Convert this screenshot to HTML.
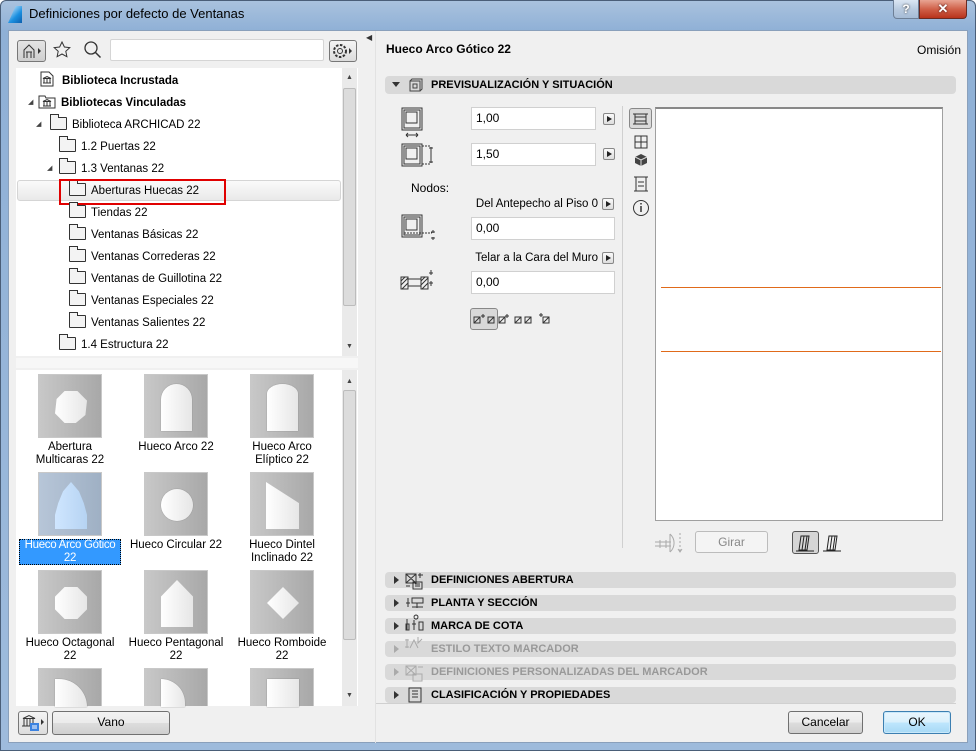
<!DOCTYPE html>
<html><head><meta charset="utf-8"><style>
*{box-sizing:border-box;margin:0;padding:0}
body{width:976px;height:751px;overflow:hidden;background:#fff;font-family:"Liberation Sans",sans-serif;font-size:12px;color:#000;position:relative}
.a{position:absolute}
.frame{left:0;top:0;width:976px;height:751px;background:linear-gradient(#a9c2de,#8fb0d6 30px,#9ebbdc);border:1px solid #4a5e78;border-radius:6px 6px 0 0}
.client{left:8px;top:30px;width:960px;height:713px;background:#f0f0f0;border:1px solid #8aa0bb}
.tree{left:16px;top:68px;width:342px;height:288px;background:#fff}
.thumbs{left:16px;top:370px;width:342px;height:336px;background:#fff}
.sb{background:#eaeaea;width:15px}
.sbt{background:#dcdcdc;border:1px solid #bcbcbc;border-radius:2px}
.ti{position:absolute;height:22px;line-height:22px;white-space:nowrap;font-size:11.5px}
.fold{display:inline-block;width:17px;height:13px;border:1px solid #333;background:#f3f3f3;vertical-align:-2px;margin-right:5px;position:relative;border-radius:1px}
.fold:before{content:"";position:absolute;left:-1px;top:-4px;width:7px;height:3px;border:1px solid #333;border-bottom:none;background:#f3f3f3}
.tri{position:absolute;font-size:7px;color:#444}
.th{position:absolute;width:64px;height:64px;background:linear-gradient(90deg,#c8c8c8,#a8a8a8);border:1px solid #c8c8c8}
.lab{position:absolute;width:106px;text-align:center;line-height:13px;color:#000;font-size:11.5px}
.shape{position:absolute;background:linear-gradient(90deg,#fff,#e6e6e6);box-shadow:0 0 1px #777}
.inp{position:absolute;background:#fff;border:1px solid #d0d0d0;height:23px;line-height:21px;padding-left:4px}
.arr{position:absolute;width:12px;height:12px;border:1px solid #888;border-radius:2px;background:linear-gradient(#fafafa,#ddd)}
.arr:after{content:"";position:absolute;left:3px;top:2px;border-left:5px solid #222;border-top:3.5px solid transparent;border-bottom:3.5px solid transparent}
.sec{position:absolute;left:385px;width:571px;height:16px;background:#d9d9d9;border-radius:4px;font-weight:bold;font-size:11px;line-height:16px;padding-left:46px}
.sec:before{content:"";position:absolute;left:9px;top:4px;border-left:5px solid #333;border-top:4px solid transparent;border-bottom:4px solid transparent}
.sec.dis{color:#999}.sec.dis:before{border-left-color:#aaa}
.btn{position:absolute;border:1px solid #707070;border-radius:3px;background:linear-gradient(#f2f2f2,#ebebeb 50%,#dddddd 51%,#cfcfcf);text-align:center;line-height:21px}
.rl{position:absolute;right:378px;white-space:nowrap;font-size:11.5px}
</style></head><body>
<div class="a frame"></div>
<div class="a" style="left:8px;top:6px;width:14px;height:17px;background:linear-gradient(135deg,#eaf6ff,#1a8fe0 60%,#0b5fae);clip-path:polygon(55% 0,100% 0,100% 100%,0 100%)"></div>
<div class="a" style="left:29px;top:6px;font-size:13px;color:#000">Definiciones por defecto de Ventanas</div>
<div class="a" style="left:893px;top:0;width:26px;height:19px;border:1px solid #6d7f96;border-top:none;border-radius:0 0 0 4px;background:linear-gradient(#dbe6f3,#b9cbe0 50%,#a6bcd6);text-align:center;color:#fff;font-weight:bold;font-size:12px;line-height:18px;text-shadow:0 0 2px #333">?</div>
<div class="a" style="left:919px;top:0;width:48px;height:19px;border:1px solid #6b2a22;border-top:none;border-radius:0 0 4px 0;background:linear-gradient(#e8a493,#d0614a 50%,#b8331c);text-align:center;color:#fff;font-weight:bold;font-size:13px;line-height:18px;text-shadow:0 0 2px #300">✕</div>
<div class="a client"></div>

<div class="a" style="left:17px;top:40px;width:29px;height:22px;border:1px solid #777;border-radius:3px;background:linear-gradient(#e4e4e4,#cfcfcf)"></div>
<svg class="a" style="left:22px;top:43px" width="22" height="16"><path d="M2 15V7l5-5 5 5v8M4 9h6M5 9v6M9 9v6" fill="none" stroke="#333"/><path d="M16 5l3 3-3 3z" fill="#333"/></svg>
<svg class="a" style="left:52px;top:40px" width="20" height="20"><path d="M10 2l2.4 5 5.4.6-4 3.7 1.1 5.4L10 14l-4.9 2.7 1.1-5.4-4-3.7 5.4-.6z" fill="none" stroke="#333"/></svg>
<svg class="a" style="left:83px;top:40px" width="20" height="20"><circle cx="8" cy="8" r="6" fill="none" stroke="#333" stroke-width="1.3"/><path d="M12.5 12.5l5 5" stroke="#333" stroke-width="1.5"/></svg>
<div class="a" style="left:110px;top:39px;width:214px;height:22px;background:#fff;border:1px solid #d5d5d5;border-radius:2px"></div>
<div class="a" style="left:329px;top:40px;width:28px;height:22px;border:1px solid #777;border-radius:3px;background:linear-gradient(#f4f4f4,#dcdcdc)"></div>
<svg class="a" style="left:331px;top:42px" width="24" height="18"><circle cx="9" cy="9" r="6" fill="none" stroke="#333" stroke-dasharray="2.5 1.5" stroke-width="2"/><circle cx="9" cy="9" r="2.5" fill="none" stroke="#333"/><path d="M18 6l3 3-3 3z" fill="#333"/></svg>
<div class="a" style="left:366px;top:33px;font-size:8px;color:#333">◀</div>

<div class="a tree">
 <div class="a sb" style="left:326px;top:0;height:288px"></div>
 <div class="a" style="left:330px;top:6px;font-size:7px;color:#444">▲</div>
 <div class="a sbt" style="left:327px;top:20px;width:13px;height:218px"></div>
 <div class="a" style="left:330px;top:275px;font-size:7px;color:#444">▼</div>
 <div class="a" style="left:1px;top:112px;width:324px;height:21px;border:1px solid #d5d5d5;border-radius:3px;background:linear-gradient(#fafafa,#e9e9e9)"></div>
 <div class="ti" style="left:24px;top:2px;font-weight:bold"><svg width="14" height="16" style="vertical-align:-3px;margin-right:8px"><path d="M1 1h8l4 4v10H1z" fill="#fff" stroke="#333"/><path d="M3 12h8M4 8v4M7 8v4M10 8v4M3 7.5l4-2 4 2z" stroke="#333" fill="none"/></svg>Biblioteca Incrustada</div>
 <div class="tri" style="left:12px;top:30px">◢</div>
 <div class="ti" style="left:22px;top:24px;font-weight:bold"><svg width="18" height="16" style="vertical-align:-3px;margin-right:5px"><path d="M1 3h6l1 2h9v10H1z" fill="#fff" stroke="#333"/><path d="M5 13h8M6 9v4M9 9v4M12 9v4M5 8.5l4-2 4 2z" stroke="#333" fill="none"/></svg>Bibliotecas Vinculadas</div>
 <div class="tri" style="left:20px;top:52px">◢</div>
 <div class="ti" style="left:34px;top:46px"><span class="fold"></span>Biblioteca ARCHICAD 22</div>
 <div class="ti" style="left:43px;top:68px"><span class="fold"></span>1.2 Puertas 22</div>
 <div class="tri" style="left:31px;top:96px">◢</div>
 <div class="ti" style="left:43px;top:90px"><span class="fold"></span>1.3 Ventanas 22</div>
 <div class="ti" style="left:53px;top:112px"><span class="fold"></span>Aberturas Huecas 22</div>
 <div class="a" style="left:43px;top:111px;width:167px;height:26px;border:2px solid #e00000"></div>
 <div class="ti" style="left:53px;top:134px"><span class="fold"></span>Tiendas 22</div>
 <div class="ti" style="left:53px;top:156px"><span class="fold"></span>Ventanas Básicas 22</div>
 <div class="ti" style="left:53px;top:178px"><span class="fold"></span>Ventanas Correderas 22</div>
 <div class="ti" style="left:53px;top:200px"><span class="fold"></span>Ventanas de Guillotina 22</div>
 <div class="ti" style="left:53px;top:222px"><span class="fold"></span>Ventanas Especiales 22</div>
 <div class="ti" style="left:53px;top:244px"><span class="fold"></span>Ventanas Salientes 22</div>
 <div class="ti" style="left:43px;top:266px"><span class="fold"></span>1.4 Estructura 22</div>
</div>
<div class="a" style="left:16px;top:358px;width:342px;height:10px;background:#f7f7f7"></div>

<div class="a thumbs">
 <div class="a sb" style="left:326px;top:0;height:336px"></div>
 <div class="a" style="left:330px;top:8px;font-size:7px;color:#444">▲</div>
 <div class="a sbt" style="left:327px;top:20px;width:13px;height:250px"></div>
 <div class="a" style="left:330px;top:322px;font-size:7px;color:#444">▼</div>
 <div class="th" style="left:22px;top:4px"><div class="shape" style="left:16px;top:16px;width:32px;height:32px;clip-path:polygon(30% 0,70% 0,100% 30%,95% 75%,65% 100%,30% 100%,0 70%,5% 25%)"></div></div>
 <div class="th" style="left:128px;top:4px"><div class="shape" style="left:16px;top:9px;width:31px;height:47px;border-radius:16px 16px 0 0"></div></div>
 <div class="th" style="left:234px;top:4px"><div class="shape" style="left:16px;top:9px;width:31px;height:47px;border-radius:16px 16px 0 0/10px 10px 0 0"></div></div>
 <div class="lab" style="left:1px;top:71px">Abertura<br>Multicaras 22</div>
 <div class="lab" style="left:107px;top:71px">Hueco Arco 22</div>
 <div class="lab" style="left:213px;top:71px">Hueco Arco<br>Elíptico 22</div>
 <div class="th" style="left:22px;top:102px;background:linear-gradient(90deg,#b7c6d8,#9fb0c4)"><div class="shape" style="left:16px;top:9px;width:32px;height:47px;background:linear-gradient(90deg,#cfe6ff,#b6d3f2);clip-path:polygon(50% 0,75% 20%,90% 45%,100% 70%,100% 100%,0 100%,0 70%,10% 45%,25% 20%)"></div></div>
 <div class="th" style="left:128px;top:102px"><div class="shape" style="left:16px;top:16px;width:32px;height:32px;border-radius:50%"></div></div>
 <div class="th" style="left:234px;top:102px"><div class="shape" style="left:15px;top:9px;width:33px;height:47px;clip-path:polygon(0 0,100% 45%,100% 100%,0 100%)"></div></div>
 <div class="a" style="left:3px;top:169px;width:102px;height:26px;background:#3399ff;border:1px dotted #000"></div>
 <div class="lab" style="left:1px;top:169px;color:#fff;letter-spacing:-0.3px">Hueco Arco Gótico<br>22</div>
 <div class="lab" style="left:107px;top:169px">Hueco Circular 22</div>
 <div class="lab" style="left:213px;top:169px">Hueco Dintel<br>Inclinado 22</div>
 <div class="th" style="left:22px;top:200px"><div class="shape" style="left:16px;top:16px;width:32px;height:32px;clip-path:polygon(30% 0,70% 0,100% 30%,100% 70%,70% 100%,30% 100%,0 70%,0 30%)"></div></div>
 <div class="th" style="left:128px;top:200px"><div class="shape" style="left:16px;top:9px;width:32px;height:47px;clip-path:polygon(50% 0,100% 35%,100% 100%,0 100%,0 35%)"></div></div>
 <div class="th" style="left:234px;top:200px"><div class="shape" style="left:16px;top:16px;width:32px;height:32px;clip-path:polygon(50% 0,100% 50%,50% 100%,0 50%)"></div></div>
 <div class="lab" style="left:1px;top:267px">Hueco Octagonal<br>22</div>
 <div class="lab" style="left:107px;top:267px">Hueco Pentagonal<br>22</div>
 <div class="lab" style="left:213px;top:267px">Hueco Romboide<br>22</div>
 <div class="th" style="left:22px;top:298px;height:38px;border-bottom:none"><div class="shape" style="left:16px;top:10px;width:32px;height:28px;border-radius:0 30px 0 0"></div></div>
 <div class="th" style="left:128px;top:298px;height:38px;border-bottom:none"><div class="shape" style="left:16px;top:10px;width:24px;height:28px;border-radius:0 24px 0 0"></div></div>
 <div class="th" style="left:234px;top:298px;height:38px;border-bottom:none"><div class="shape" style="left:16px;top:10px;width:32px;height:28px"></div></div>
</div>

<div class="a" style="left:18px;top:711px;width:30px;height:24px;border:1px solid #777;border-radius:3px;background:linear-gradient(#f4f4f4,#dcdcdc)"></div>
<svg class="a" style="left:20px;top:713px" width="26" height="20"><path d="M2 13h12M3 5.5l6-3 6 3zM4 6v7M7 6v7M10 6v7M13 6v7" stroke="#333" fill="none"/><rect x="10" y="10" width="9" height="8" fill="#3b82e0"/><path d="M12 13h5M12 15h5" stroke="#fff"/><path d="M21 6l3 3-3 3z" fill="#333"/></svg>
<div class="btn" style="left:52px;top:711px;width:118px;height:24px">Vano</div>

<div class="a" style="left:375px;top:31px;width:1px;height:712px;background:#e2e2e2"></div>

<div class="a" style="left:386px;top:42px;font-weight:bold;font-size:12px">Hueco Arco Gótico 22</div>
<div class="a" style="left:917px;top:43px">Omisión</div>

<div class="a" style="left:385px;top:76px;width:571px;height:18px;background:#d9d9d9;border-radius:4px"></div>
<div class="a" style="left:392px;top:82px;border-top:5px solid #333;border-left:4px solid transparent;border-right:4px solid transparent"></div>
<svg class="a" style="left:407px;top:77px" width="16" height="16"><path d="M3 4h10v10H3zM3 4l2-2h10v10l-2 2M6 7h4v4H6z" fill="none" stroke="#444"/></svg>
<div class="a" style="left:431px;top:79px;font-weight:bold;font-size:11px">PREVISUALIZACIÓN Y SITUACIÓN</div>

<svg class="a" style="left:400px;top:106px" width="26" height="32"><rect x="2" y="2" width="20" height="22" fill="none" stroke="#333"/><rect x="4" y="4" width="16" height="18" fill="none" stroke="#333"/><rect x="6" y="6" width="11" height="11" fill="none" stroke="#333"/><path d="M6 29h12M6 29l2-2M6 29l2 2M18 29l-2-2M18 29l-2 2" stroke="#333" fill="none"/></svg>
<div class="inp" style="left:471px;top:107px;width:125px">1,00</div>
<div class="arr" style="left:603px;top:113px"></div>
<svg class="a" style="left:400px;top:142px" width="36" height="28"><rect x="2" y="2" width="20" height="22" fill="none" stroke="#333"/><rect x="4" y="4" width="16" height="18" fill="none" stroke="#333"/><rect x="6" y="6" width="11" height="11" fill="none" stroke="#333"/><path d="M22 4h8M22 22h8" stroke="#333" stroke-dasharray="2 1"/><path d="M31 5v16M29 6h4M29 20h4" stroke="#333"/></svg>
<div class="inp" style="left:471px;top:143px;width:125px">1,50</div>
<div class="arr" style="left:603px;top:148px"></div>
<div class="a" style="left:411px;top:181px">Nodos:</div>
<div class="rl" style="top:198px">Del Antepecho al Piso 0</div>
<div class="arr" style="left:602px;top:198px"></div>
<svg class="a" style="left:400px;top:213px" width="38" height="30"><rect x="2" y="2" width="20" height="22" fill="none" stroke="#333"/><rect x="4" y="4" width="16" height="18" fill="none" stroke="#333"/><rect x="6" y="6" width="11" height="11" fill="none" stroke="#333"/><path d="M4 20h28" stroke="#333" stroke-dasharray="2 1"/><path d="M33 17v3M31 19h4M33 24v3M31 25h4" stroke="#333"/></svg>
<div class="inp" style="left:471px;top:217px;width:144px">0,00</div>
<div class="rl" style="top:252px">Telar a la Cara del Muro</div>
<div class="arr" style="left:602px;top:252px"></div>
<svg class="a" style="left:398px;top:268px" width="40" height="24"><path d="M3 9h7v12H3zM23 9h7v12h-7z" fill="none" stroke="#333"/><path d="M3 13l4-4M3 17l7-7M4 21l6-6M23 13l4-4M23 17l7-7M24 21l6-6" stroke="#333"/><path d="M10 11h13M10 18h13" stroke="#333"/><path d="M33 2v5M31 5h4M33 13v5M31 15h4" stroke="#333"/></svg>
<div class="inp" style="left:471px;top:271px;width:144px">0,00</div>
<div class="a" style="left:470px;top:308px;width:28px;height:22px;border:1px solid #888;border-radius:3px;background:#d8d8d8"></div>
<svg class="a" style="left:472px;top:312px" width="80" height="14"><g fill="none" stroke="#333"><rect x="2" y="5" width="6" height="6"/><path d="M2 11l6-6M11 2v4M9 4h4"/><rect x="16" y="5" width="6" height="6"/><path d="M16 11l6-6"/><rect x="27" y="5" width="6" height="6"/><path d="M27 11l6-6M35 2v4M33 4h4"/><rect x="43" y="5" width="6" height="6"/><path d="M43 11l6-6"/><rect x="53" y="5" width="6" height="6"/><path d="M53 11l6-6"/><rect x="71" y="5" width="6" height="6"/><path d="M71 11l6-6M69 1v4M67 3h4"/></g></svg>

<div class="a" style="left:622px;top:106px;width:1px;height:442px;background:#d0d0d0"></div>
<div class="a" style="left:629px;top:108px;width:23px;height:21px;border:1px solid #888;border-radius:3px;background:#dadada"></div>
<svg class="a" style="left:630px;top:109px" width="22" height="112"><path d="M3 5h15M3 15h15M5 5v10M16 5v10M5 8h11M5 12h11" stroke="#333" fill="none"/><path d="M5 27h12v12H5zM11 27v12M5 33h12" stroke="#333" fill="none"/><path d="M11 45l6 3v6l-6 3-6-3v-6z" fill="#444"/><path d="M5 48l6 3 6-3M11 51v6" stroke="#ddd" fill="none"/><path d="M4 68h14M4 82h14M6 68v14M16 68v14M8 73h6M8 77h6" stroke="#333" fill="none"/><circle cx="11" cy="99" r="7.5" fill="none" stroke="#333"/><path d="M11 97v6M11 94v1.5" stroke="#333" stroke-width="1.5"/></svg>
<div class="a" style="left:655px;top:107px;width:288px;height:414px;background:#fff;border:1px solid #a0a0a0;border-top:2px solid #888"></div>
<div class="a" style="left:661px;top:287px;width:280px;height:1px;background:#e06a1a"></div>
<div class="a" style="left:661px;top:351px;width:280px;height:1px;background:#e06a1a"></div>
<svg class="a" style="left:652px;top:530px" width="42" height="26" opacity="0.45"><path d="M3 12h16M3 16h16M8 10v8M14 10v8M18 4a12 12 0 0 1 0 18M18 4v18" stroke="#555" fill="none"/><path d="M28 3v18" stroke="#555" stroke-dasharray="2 2"/><path d="M26 19l2 3 2-3" stroke="#555" fill="none"/></svg>
<div class="a" style="left:695px;top:531px;width:73px;height:22px;border:1px solid #bcbcbc;border-radius:3px;background:#f4f4f4;color:#888;text-align:center;line-height:20px">Girar</div>
<div class="a" style="left:792px;top:531px;width:27px;height:23px;border:1px solid #555;border-radius:3px;background:#d5d5d5"></div>
<svg class="a" style="left:794px;top:533px" width="50" height="20"><path d="M7 3h8l-2 14H5zM10 3l-2 14M13 3l-2 14M2 18h18" stroke="#222" fill="none"/><path d="M35 3h8l-2 14h-8zM38 3l-2 14M41 3l-2 14M29 18h18" stroke="#222" fill="none"/></svg>

<div class="sec" style="top:572px">DEFINICIONES ABERTURA</div>
<div class="sec" style="top:595px">PLANTA Y SECCIÓN</div>
<div class="sec" style="top:618px">MARCA DE COTA</div>
<div class="sec dis" style="top:641px">ESTILO TEXTO MARCADOR</div>
<div class="sec dis" style="top:664px">DEFINICIONES PERSONALIZADAS DEL MARCADOR</div>
<div class="sec" style="top:687px">CLASIFICACIÓN Y PROPIEDADES</div>
<svg class="a" style="left:404px;top:572px" width="24" height="132"><g stroke="#333" fill="none"><path d="M2 2h10v9H2zM2 2l10 9M12 2L2 11M14 3h5M16 1v5M2 14h4M9 10h9v7H9zM11 12h5M11 14h5"/><path d="M2 31h4M4 26v9M8 26h11v5H8zM13 31v5M8 35h11"/><path d="M2 52h3v6H2zM3 47v11M10 45a2 2 0 1 1 0 .1M10 48v10M8 52h4M15 50h4v8h-4z"/></g><g stroke="#aaa" fill="none"><path d="M3 76v-9M1 68h4M1 75h4M6 76l4-8 4 8M14 65v6l4-4"/><path d="M2 94h10v9H2zM2 94l10 9M12 94L2 103M14 95h5M9 102h9v7H9z"/></g><path d="M5 116h12v14H5zM8 119h6M8 122h6M8 125h6" stroke="#333" fill="none"/></svg>

<div class="a" style="left:376px;top:703px;width:580px;height:1px;background:#d0d0d0"></div>
<div class="btn" style="left:788px;top:711px;width:75px;height:23px">Cancelar</div>
<div class="btn" style="left:883px;top:711px;width:68px;height:23px;border-color:#3c7fb1;background:linear-gradient(#eaf6fd,#d9f0fc 50%,#bee6fd 51%,#a7d9f5);box-shadow:inset 0 0 0 1px #c8e8fa">OK</div>
</body></html>
